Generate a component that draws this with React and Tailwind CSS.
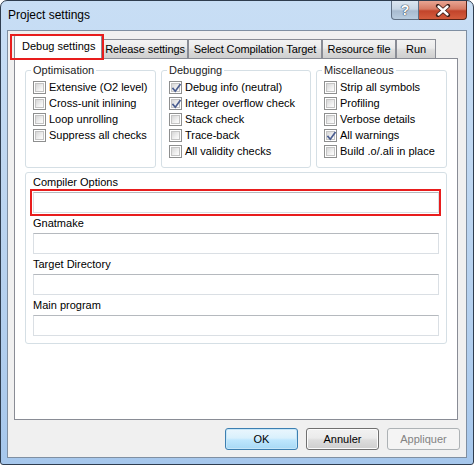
import React from 'react';

const FONT = "font-['Liberation_Sans',Arial,sans-serif]";

const Checkbox = ({ checked }) => (
  <span className="w-[13px] h-[13px] shrink-0 border border-[#8e8f8f] bg-white p-px">
    <span className="relative block w-full h-full border border-[#c4c4c4] bg-[linear-gradient(135deg,#d6d6d6_0%,#f4f4f4_70%,#fdfdfd_100%)]">
      {checked && (
        <svg className="absolute -left-[1px] -top-[1px]" width="11" height="11" viewBox="0 0 11 11">
          <path d="M2 5.5 L4.3 8.2 L9 1.8" fill="none" stroke="#4a5d8f" strokeWidth="1.7" strokeLinecap="square" />
        </svg>
      )}
    </span>
  </span>
);

const Group = ({ title, width, items }) => (
  <div className={`relative h-[98px] ${width} shrink-0 rounded-[3px] border border-[#d5dfe5] pl-[7px] pt-[8px]`}>
    <span className="absolute -top-[8px] left-[5px] bg-white px-[2px] leading-[14px] text-[#1b1b1b]">{title}</span>
    {items.map(([label, checked]) => (
      <div key={label} className="flex h-[16px] items-center gap-[3px]">
        <Checkbox checked={checked} />
        <span className="leading-[13px] whitespace-nowrap">{label}</span>
      </div>
    ))}
  </div>
);

const TextBox = () => (
  <div className="h-[21px] w-[406px] border border-[#dadfe4] border-t-[#b5b9be] bg-white" />
);

const Tab = ({ label, w, selected }) =>
  selected ? (
    <div className={`relative z-10 -mb-px h-[24px] ${w} whitespace-nowrap rounded-t-[2px] border border-b-0 border-[#898c95] bg-white pl-[7px] pt-[4px] leading-[13px]`}>
      {label}
      <span className="pointer-events-none absolute -left-[5px] -right-[3px] -top-[2px] -bottom-[1px] border-2 border-[#e81d1d]" />
    </div>
  ) : (
    <div className={`flex h-[19px] ${w} justify-center overflow-hidden whitespace-nowrap border border-b-0 border-[#898c95] bg-[linear-gradient(180deg,#f3f3f3_0%,#ebebeb_45%,#dddddd_55%,#cfcfcf_100%)] pt-[3px] leading-[13px] tracking-[-0.1px]`}>
      {label}
    </div>
  );

const Button = ({ label, variant }) => {
  const styles = {
    default:
      'border-[#3c7fb1] bg-[linear-gradient(180deg,#eaf6fd_0%,#d9f0fc_45%,#bee6fd_55%,#a7d9f5_100%)] text-black shadow-[inset_0_0_0_1px_#c6e6f8]',
    normal:
      'border-[#707070] bg-[linear-gradient(180deg,#f2f2f2_0%,#ebebeb_45%,#dddddd_55%,#cfcfcf_100%)] text-black shadow-[inset_0_0_0_1px_#fcfcfc]',
    disabled: 'border-[#adb2b5] bg-[#f4f4f4] text-[#838383]',
  };
  return (
    <div className={`flex h-[22px] w-[73px] items-center justify-center rounded-[3px] border ${styles[variant]}`}>
      {label}
    </div>
  );
};

export default function App() {
  return (
    <div className={`${FONT} text-[11px] text-black w-[474px] h-[465px] overflow-hidden`}>
      <div className="flex h-full w-full flex-col rounded-t-[7px] rounded-b-[3px] border border-[#2f3d4f] bg-[linear-gradient(180deg,#c8def5_0%,#bfd7f1_35%,#b3cfee_70%,#a6c7ec_100%)] px-[6px] pb-[6px]">
        {/* title bar */}
        <div className="flex h-[29px] shrink-0 items-start justify-between">
          <span className="pl-[1px] pt-[7px] text-[12px] leading-[15px] text-black">Project settings</span>
          <div className="flex">
            <div className="flex h-[19px] w-[28px] items-center justify-center rounded-bl-[4px] border border-t-0 border-[#5f6f83] bg-[linear-gradient(180deg,#dbe6f1_0%,#c7d6e5_45%,#a8bbd0_55%,#b9cde0_100%)]">
              <span className="text-[14px] font-bold leading-none text-white [text-shadow:0_0_1px_#3a4a5e,0_0_1px_#3a4a5e,0_0_1px_#3a4a5e]">?</span>
            </div>
            <div className="flex h-[19px] w-[48px] items-center justify-center rounded-br-[4px] border border-l-0 border-t-0 border-[#5a2418] bg-[linear-gradient(180deg,#e8a593_0%,#d67a63_45%,#c2442b_55%,#d45c3d_100%)]">
              <svg width="16" height="13" viewBox="0 0 16 13">
                <path d="M3 2 L13 11 M13 2 L3 11" stroke="#3b1f1a" strokeWidth="4.2" strokeLinecap="round" />
                <path d="M3.5 2.5 L12.5 10.5 M12.5 2.5 L3.5 10.5" stroke="#ffffff" strokeWidth="2.4" strokeLinecap="round" />
              </svg>
            </div>
          </div>
        </div>

        {/* client area */}
        <div className="flex flex-1 flex-col border border-[#7f8fa2] bg-[#f0f0f0] pl-[6px] pt-[5px]">
          <div className="flex h-[22px] items-end">
            <Tab label="Debug settings" w="w-[88px]" selected />
            <Tab label="Release settings" w="w-[86px]" />
            <Tab label="Select Compilation Target" w="w-[134px]" />
            <Tab label="Resource file" w="w-[74px]" />
            <Tab label="Run" w="w-[40px]" />
          </div>

          <div className="h-[362px] w-[444px] border border-[#898c95] bg-white pl-[10px] pt-[11px]">
            <div className="flex gap-[5px]">
              <Group
                title="Optimisation"
                width="w-[131px]"
                items={[
                  ['Extensive (O2 level)', false],
                  ['Cross-unit inlining', false],
                  ['Loop unrolling', false],
                  ['Suppress all checks', false],
                ]}
              />
              <Group
                title="Debugging"
                width="w-[150px]"
                items={[
                  ['Debug info (neutral)', true],
                  ['Integer overflow check', true],
                  ['Stack check', false],
                  ['Trace-back', false],
                  ['All validity checks', false],
                ]}
              />
              <Group
                title="Miscellaneous"
                width="w-[131px]"
                items={[
                  ['Strip all symbols', false],
                  ['Profiling', false],
                  ['Verbose details', false],
                  ['All warnings', true],
                  ['Build .o/.ali in place', false],
                ]}
              />
            </div>

            <div className="mt-[4px] h-[172px] w-[422px] rounded-[3px] border border-[#d5dfe5] pl-[7px]">
              <div className="h-[19px] pt-[3px] leading-[13px]">Compiler Options</div>
              <div className="relative">
                <TextBox />
                <span className="pointer-events-none absolute -left-[3px] -top-[3px] -bottom-[3px] w-[411px] border-2 border-[#e81d1d]" />
              </div>
              <div className="h-[20px] pt-[4px] leading-[13px]">Gnatmake</div>
              <TextBox />
              <div className="h-[20px] pt-[4px] leading-[13px]">Target Directory</div>
              <TextBox />
              <div className="h-[20px] pt-[4px] leading-[13px]">Main program</div>
              <TextBox />
            </div>
          </div>

          <div className="flex justify-end gap-[8px] pr-[6px] pt-[8px]">
            <Button label="OK" variant="default" />
            <Button label="Annuler" variant="normal" />
            <Button label="Appliquer" variant="disabled" />
          </div>
        </div>
      </div>
    </div>
  );
}
